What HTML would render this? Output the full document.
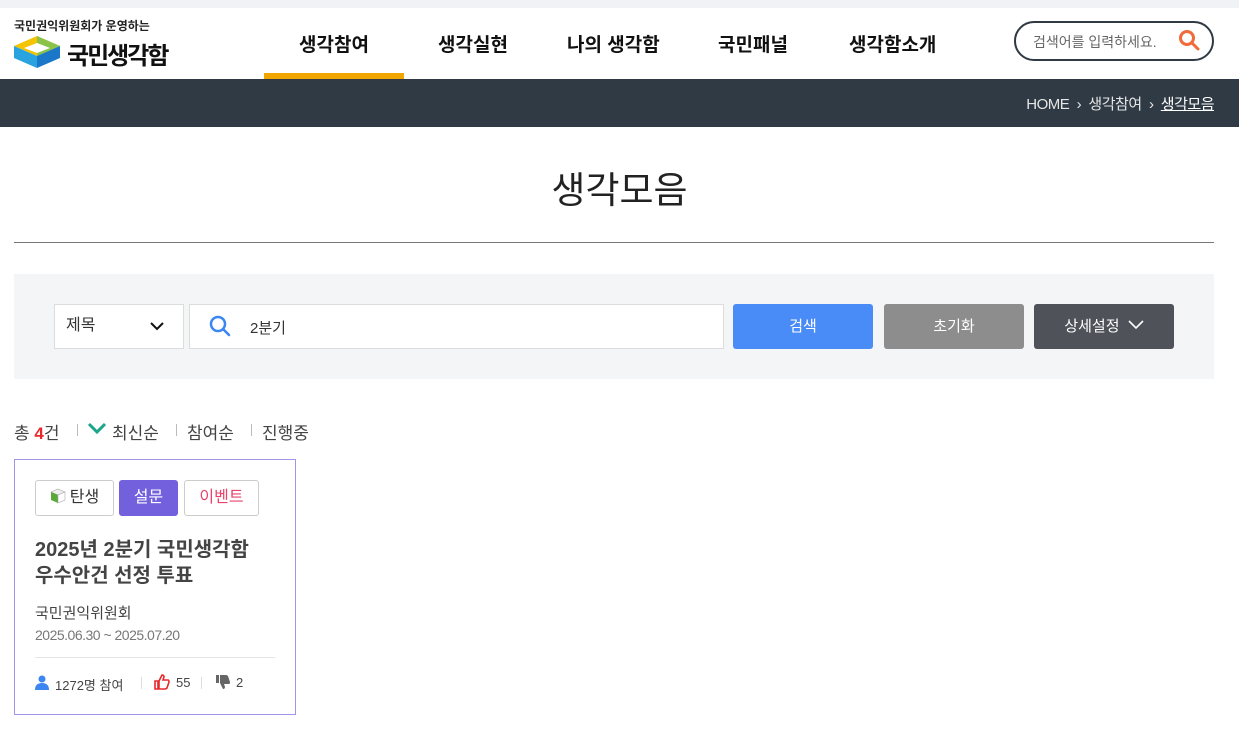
<!DOCTYPE html>
<html><head><meta charset="utf-8"><style>
*{margin:0;padding:0;box-sizing:border-box}
body{width:1239px;height:739px;background:#fff;font-family:"Liberation Sans","Noto Sans CJK KR",sans-serif;color:#333;position:relative;overflow:hidden}
.a{position:absolute;white-space:nowrap}
.topbar{left:0;top:0;width:1239px;height:8px;background:#f1f2f6}
.nav{top:30px;font-size:19px;font-weight:bold;color:#111}
.crumb{left:0;top:79px;width:1239px;height:48px;background:#2f3a45}
.btn{top:304px;height:45px;border-radius:3px;color:#fff;font-size:15px;text-align:center;line-height:45px}
.tag{top:480px;height:36px;border:1px solid #ccc;border-radius:3px;font-size:16px;line-height:34px;text-align:center}
.sep{width:1px;height:12px;background:#bbb}
.f{top:419px;font-size:17px;color:#444}
</style></head><body>
<div class="a topbar"></div>
<div class="a" style="left:14px;top:17px;font-size:12px;font-weight:bold;color:#222">국민권익위원회가 운영하는</div>
<svg class="a" style="left:14px;top:36px" width="46" height="32" viewBox="0 0 46 32"><polygon points="0,10 23,0 46,10 23,20" fill="#f4c400"/><polygon points="23,0 46,10 23,20" fill="#8bc34a"/><polygon points="0,10 23,20 23,32 0,22" fill="#29a3e0"/><polygon points="23,20 46,10 46,22 23,32" fill="#1b78c8"/><polygon points="10,12 23,7 36,12 23,17" fill="#fff"/></svg>
<div class="a" style="left:67px;top:36px;font-size:24px;font-weight:bold;color:#111;letter-spacing:-2px">국민생각함</div>
<div class="a nav" style="left:299px">생각참여</div>
<div class="a nav" style="left:438px">생각실현</div>
<div class="a nav" style="left:567px">나의 생각함</div>
<div class="a nav" style="left:718px">국민패널</div>
<div class="a nav" style="left:849px">생각함소개</div>
<div class="a" style="left:264px;top:73px;width:140px;height:6px;background:#f0a500"></div>
<div class="a" style="left:1014px;top:21px;width:200px;height:40px;border:2px solid #2f3a45;border-radius:20px"></div>
<div class="a" style="left:1033px;top:32px;font-size:14px;color:#666">검색어를 입력하세요.</div>
<svg class="a" style="left:1178px;top:29px" width="22" height="22" viewBox="0 0 22 22"><circle cx="9" cy="9" r="6.5" fill="none" stroke="#f06a3a" stroke-width="3"/><line x1="14" y1="14" x2="20" y2="20" stroke="#f06a3a" stroke-width="3" stroke-linecap="round"/></svg>
<div class="a crumb"></div>
<div class="a" style="right:25px;top:93px;font-size:15px;color:#e6e6e6;letter-spacing:-0.5px">HOME &nbsp;›&nbsp; 생각참여 &nbsp;›&nbsp; <span style="color:#fff;text-decoration:underline">생각모음</span></div>
<div class="a" style="left:0;width:1239px;top:160px;text-align:center;font-size:37px;color:#222">생각모음</div>
<div class="a" style="left:14px;top:242px;width:1200px;height:1px;background:#777"></div>
<div class="a" style="left:14px;top:274px;width:1200px;height:105px;background:#f4f5f7"></div>
<div class="a" style="left:54px;top:304px;width:130px;height:45px;background:#fff;border:1px solid #dcdcdc"></div>
<div class="a" style="left:66px;top:316px;font-size:16px;color:#333;line-height:20px">제목</div>
<svg class="a" style="left:150px;top:322px" width="14" height="9" viewBox="0 0 14 9"><polyline points="1,1 7,7 13,1" fill="none" stroke="#111" stroke-width="2"/></svg>
<div class="a" style="left:189px;top:304px;width:535px;height:45px;background:#fff;border:1px solid #dcdcdc"></div>
<svg class="a" style="left:209px;top:315px" width="22" height="22" viewBox="0 0 22 22"><circle cx="9" cy="9" r="7" fill="none" stroke="#3b86f0" stroke-width="2.5"/><line x1="14" y1="14" x2="20" y2="20" stroke="#3b86f0" stroke-width="2.5" stroke-linecap="round"/></svg>
<div class="a" style="left:250px;top:317px;font-size:15px;color:#333">2분기</div>
<div class="a btn" style="left:733px;width:140px;background:#4a8cf7">검색</div>
<div class="a btn" style="left:884px;width:140px;background:#8d8d8d">초기화</div>
<div class="a btn" style="left:1034px;width:140px;background:#4f5259">상세설정 <svg width="16" height="10" viewBox="0 0 16 10" style="vertical-align:1px;margin-left:4px"><polyline points="1,1 8,8 15,1" fill="none" stroke="#fff" stroke-width="1.6"/></svg></div>
<div class="a f" style="left:14px">총 <b style="color:#e8262b">4</b>건</div>
<div class="a sep" style="left:77px;top:424px"></div>
<svg class="a" style="left:87px;top:422px" width="20" height="13" viewBox="0 0 20 13"><polyline points="2,2 10,10 18,2" fill="none" stroke="#1aa68a" stroke-width="3"/></svg>
<div class="a f" style="left:112px">최신순</div>
<div class="a sep" style="left:176px;top:424px"></div>
<div class="a f" style="left:187px">참여순</div>
<div class="a sep" style="left:251px;top:424px"></div>
<div class="a f" style="left:262px">진행중</div>
<div class="a" style="left:14px;top:459px;width:282px;height:256px;border:1px solid #a394e8"></div>
<div class="a tag" style="left:35px;width:79px;color:#333"><svg width="16" height="16" viewBox="0 0 16 16" style="vertical-align:-2px;margin-right:4px"><polygon points="8,1 15,4 8,7 1,4" fill="#eee" stroke="#aaa" stroke-width="0.6"/><polygon points="1,4 8,7 8,15 1,12" fill="#5aa83a"/><polygon points="8,7 15,4 15,12 8,15" fill="#fff" stroke="#aaa" stroke-width="0.6"/></svg>탄생</div>
<div class="a tag" style="left:119px;width:59px;background:#7360dd;border-color:#7360dd;color:#fff">설문</div>
<div class="a tag" style="left:184px;width:75px;color:#e8446b">이벤트</div>
<div class="a" style="left:35px;top:537px;font-size:20px;font-weight:bold;color:#444;line-height:26px">2025년 2분기 국민생각함<br>우수안건 선정 투표</div>
<div class="a" style="left:35px;top:602px;font-size:15px;color:#444">국민권익위원회</div>
<div class="a" style="left:35px;top:627px;font-size:14px;color:#777;letter-spacing:-0.5px">2025.06.30 ~ 2025.07.20</div>
<div class="a" style="left:35px;top:657px;width:240px;height:1px;background:#e5e5e5"></div>
<svg class="a" style="left:35px;top:675px" width="14" height="15" viewBox="0 0 14 15"><circle cx="7" cy="4" r="3.5" fill="#3b86f0"/><path d="M0,15 Q0,8 7,8 Q14,8 14,15Z" fill="#3b86f0"/></svg>
<div class="a" style="left:55px;top:675px;font-size:13px;color:#444">1272명 참여</div>
<div class="a sep" style="left:141px;top:677px;background:#ddd"></div>
<svg class="a" style="left:154px;top:674px" width="16" height="16" viewBox="0 0 16 16"><path d="M1,7 H4 V15 H1Z M5,7 L8,1 Q10,1 10,3 L9,6 H14 Q15,6 15,8 L13,14 Q12,15 11,15 H5Z" fill="none" stroke="#e8262b" stroke-width="1.6"/></svg>
<div class="a" style="left:176px;top:675px;font-size:13px;color:#444">55</div>
<div class="a sep" style="left:201px;top:677px;background:#ddd"></div>
<svg class="a" style="left:215px;top:674px" width="16" height="16" viewBox="0 0 16 16"><path d="M1,1 H4 V9 H1Z M5,1 H11 Q12,1 13,2 L15,8 Q15,10 14,10 H9 L10,13 Q10,15 8,15 L5,9Z" fill="#666"/></svg>
<div class="a" style="left:236px;top:675px;font-size:13px;color:#444">2</div>
</body></html>
